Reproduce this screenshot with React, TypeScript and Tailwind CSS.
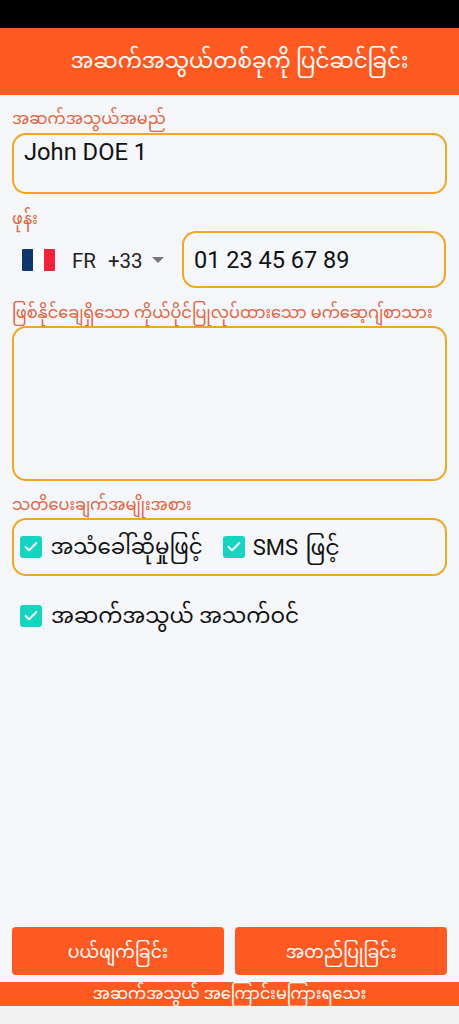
import { Check } from "lucide-react";

const font = "font-['Roboto','Noto_Sans_Myanmar','Padauk','Noto_Sans',sans-serif]";

function Label({ text }: { text: string }) {
  return <div className="h-[24px] pl-3 text-[16.2px] leading-[24px] text-[#e4633a] whitespace-nowrap">{text}</div>;
}

function CheckBox() {
  return (
    <span className="flex h-[22px] w-[22px] items-center justify-center rounded-[3px] bg-[#14d6c0]">
      <Check className="h-4 w-4 text-white" strokeWidth={3} />
    </span>
  );
}

export default function App() {
  return (
    <div className={`flex h-[1024px] w-[459px] flex-col overflow-hidden bg-[#f5f7fb] ${font}`}>
      <div className="h-[28px] bg-black" />
      <div className="flex h-[67px] items-center justify-center bg-[#ff5a22] pb-[1px] pl-[20px] text-[21.5px] text-white whitespace-nowrap">
        အဆက်အသွယ်တစ်ခုကို ပြင်ဆင်ခြင်း
      </div>

      <div className="flex-1 pt-[12px]">
        <Label text="အဆက်အသွယ်အမည်" />
        <div className="mx-3 mt-[2px] h-[61px] rounded-[14px] border-[2.5px] border-[#f4a623] pl-[10px] pt-[1px] text-[23.7px] leading-[33px] text-[#111]">
          John DOE 1
        </div>

        <div className="mt-[13px]">
          <Label text="ဖုန်း" />
        </div>
        <div className="flex h-[57px] items-center">
          <div className="flex w-[182px] items-center pl-[22px]">
            <div className="flex h-[22px] w-[33px] overflow-hidden rounded-[1px]">
              <span className="flex-1 bg-[#10376b]" />
              <span className="flex-1 bg-white" />
              <span className="flex-1 bg-[#f5203c]" />
            </div>
            <span className="ml-[17px] pt-[3px] text-[20.5px] text-[#222]">FR</span>
            <span className="ml-[12px] pt-[3px] text-[20.5px] text-[#222]">+33</span>
            <span className="ml-[9px] h-0 w-0 border-x-[6px] border-t-[6px] border-x-transparent border-t-[#777]" />
          </div>
          <div className="mr-[13px] flex h-[57px] flex-1 items-center rounded-[14px] border-[2.5px] border-[#f4a623] pl-[10px] pt-[3px] text-[23.5px] text-[#111]">
            01 23 45 67 89
          </div>
        </div>

        <div className="mt-[13px]">
          <Label text="ဖြစ်နိုင်ချေရှိသော ကိုယ်ပိုင်ပြုလုပ်ထားသော မက်ဆေ့ဂျ်စာသား" />
        </div>
        <div className="mx-3 mt-[1px] h-[155px] rounded-[14px] border-[2.5px] border-[#f4a623]" />

        <div className="mt-[12px]">
          <Label text="သတိပေးချက်အမျိုးအစား" />
        </div>
        <div className="mx-3 mt-[1px] flex h-[58px] items-center rounded-[14px] border-[2.5px] border-[#f4a623] pl-[5.5px] text-[21.4px] text-[#111]">
          <CheckBox />
          <span className="ml-[9px] whitespace-nowrap">အသံခေါ်ဆိုမှုဖြင့်</span>
          <span className="ml-[20px]">
            <CheckBox />
          </span>
          <span className="ml-[8px] whitespace-nowrap text-[22px] [word-spacing:2px]">SMS ဖြင့်</span>
        </div>

        <div className="mt-[29px] flex h-[22px] items-center pl-[20px] text-[21.5px] text-[#111]">
          <CheckBox />
          <span className="ml-[9px] whitespace-nowrap">အဆက်အသွယ် အသက်ဝင်</span>
        </div>
      </div>

      <div className="flex gap-[11.5px] px-3">
        <div className="flex h-[48px] flex-1 items-center justify-center rounded-[4px] bg-[#ff5a22] pt-[3px] text-[17.4px] text-white">
          ပယ်ဖျက်ခြင်း
        </div>
        <div className="flex h-[48px] flex-1 items-center justify-center rounded-[4px] bg-[#ff5a22] pt-[3px] text-[17.4px] text-white">
          အတည်ပြုခြင်း
        </div>
      </div>
      <div className="mt-[7px] flex h-[24px] items-center justify-center bg-[#ff5a22] text-[16.1px] text-white whitespace-nowrap">
        အဆက်အသွယ် အကြောင်းမကြားရသေး
      </div>
      <div className="h-[18px] bg-[#f2f2f2]" />
    </div>
  );
}
